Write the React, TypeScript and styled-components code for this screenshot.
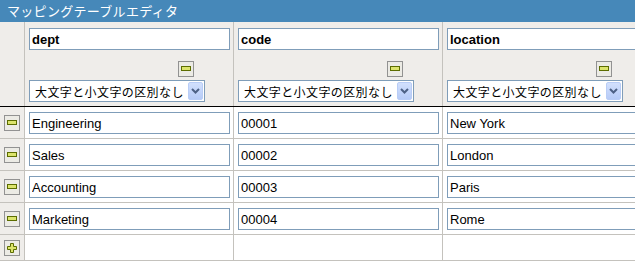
import styled, { createGlobalStyle } from 'styled-components';

const GlobalStyle = createGlobalStyle`
  body {
    margin: 0;
    overflow: hidden;
    background: #ffffff;
    font-family: "Liberation Sans", Arial, sans-serif;
  }
`;

const columns = [
  { name: 'dept', values: ['Engineering', 'Sales', 'Accounting', 'Marketing'] },
  { name: 'code', values: ['00001', '00002', '00003', '00004'] },
  { name: 'location', values: ['New York', 'London', 'Paris', 'Rome'] },
];

const MinusIcon = () => (
  <svg width="16" height="16" viewBox="0 0 16 16">
    <rect x="0.5" y="0.5" width="15" height="15" fill="#ecebe5" stroke="#929292" />
    <rect x="3.5" y="5.5" width="9" height="4" fill="#dce46c" stroke="#5c6d00" />
  </svg>
);

const PlusIcon = () => (
  <svg width="16" height="16" viewBox="0 0 16 16">
    <rect x="0.5" y="0.5" width="15" height="15" fill="#ecebe5" stroke="#929292" />
    <path
      d="M6.5 3.5 h3 v3 h3 v3 h-3 v3 h-3 v-3 h-3 v-3 h3 z"
      fill="#dce46c"
      stroke="#5c6d00"
    />
  </svg>
);

export default function App() {
  const rowCount = columns[0].values.length;

  return (
    <Editor>
      <GlobalStyle />
      <TitleBar>マッピングテーブルエディタ</TitleBar>
      <HeaderRow>
        <SideCell />
        {columns.map((col) => (
          <HeaderCell key={col.name}>
            <NameInput readOnly value={col.name} />
            <RemoveColumnLine>
              <IconButton>
                <MinusIcon />
              </IconButton>
            </RemoveColumnLine>
            <CaseSelect>
              <SelectText>大文字と小文字の区別なし</SelectText>
              <SelectArrow>
                <svg width="9" height="6" viewBox="0 0 9 6">
                  <path d="M1 1 L4.5 4.5 L8 1" fill="none" stroke="#4d6185" strokeWidth="2" />
                </svg>
              </SelectArrow>
            </CaseSelect>
          </HeaderCell>
        ))}
      </HeaderRow>
      {Array.from({ length: rowCount }).map((_, i) => (
        <DataRow key={i}>
          <SideCell $center>
            <IconButton>
              <MinusIcon />
            </IconButton>
          </SideCell>
          {columns.map((col) => (
            <DataCell key={col.name}>
              <ValueInput readOnly value={col.values[i]} />
            </DataCell>
          ))}
        </DataRow>
      ))}
      <AddRow>
        <SideCell>
          <IconButton>
            <PlusIcon />
          </IconButton>
        </SideCell>
        {columns.map((col) => (
          <DataCell key={col.name} />
        ))}
      </AddRow>
    </Editor>
  );
}

const Editor = styled.div`
  width: 652px;
`;

const TitleBar = styled.div`
  height: 22px;
  line-height: 22px;
  padding-left: 7px;
  background: #4688b9;
  color: #ffffff;
  font-family: "Noto Sans CJK JP", sans-serif;
  font-size: 13px;
  letter-spacing: 0.3px;
`;

const RowBase = styled.div`
  display: grid;
  grid-template-columns: 25px 209px 209px 209px;
`;

const HeaderRow = styled(RowBase)`
  height: 84px;
  background: #efedea;
  border-bottom: 1px solid #000000;
`;

const DataRow = styled(RowBase)`
  height: 31px;
  border-bottom: 1px solid #c4c2bd;
`;

const AddRow = styled(RowBase)`
  height: 25px;
  border-bottom: 1px solid #c4c2bd;
`;

const SideCell = styled.div<{ $center?: boolean }>`
  box-sizing: border-box;
  background: #efedea;
  border-right: 1px solid #c4c2bd;
  display: flex;
  justify-content: flex-start;
  align-items: ${({ $center }) => ($center ? 'center' : 'flex-start')};
  padding-left: 4px;
  padding-top: ${({ $center }) => ($center ? '0' : '5px')};
`;

const HeaderCell = styled.div`
  box-sizing: border-box;
  border-right: 1px solid #c4c2bd;
  padding: 6px 0 0 4px;
  display: flex;
  flex-direction: column;
`;

const DataCell = styled.div`
  box-sizing: border-box;
  border-right: 1px solid #c4c2bd;
  background: #ffffff;
  padding: 5px 0 0 4px;
`;

const InputBase = styled.input`
  box-sizing: border-box;
  width: 201px;
  height: 22px;
  margin: 0;
  border: 1px solid #7f9db9;
  padding: 0 2px;
  background: #ffffff;
  color: #000000;
  font-family: "Liberation Sans", Arial, sans-serif;
  font-size: 13px;
  outline: none;
`;

const NameInput = styled(InputBase)`
  font-weight: bold;
`;

const ValueInput = styled(InputBase)``;

const RemoveColumnLine = styled.div`
  width: 176px;
  box-sizing: border-box;
  display: flex;
  justify-content: flex-end;
  padding-right: 11px;
  margin-top: 11px;
`;

const IconButton = styled.span`
  display: block;
  width: 16px;
  height: 16px;
  line-height: 0;
  cursor: pointer;
`;

const CaseSelect = styled.div`
  box-sizing: border-box;
  width: 176px;
  height: 22px;
  margin-top: 3px;
  border: 1px solid #7f9db9;
  background: #ffffff;
  display: flex;
  align-items: center;
  justify-content: space-between;
  padding: 0 1px 0 5px;
  color: #000000;
`;

const SelectText = styled.span`
  min-width: 0;
  overflow: hidden;
  font-family: "Noto Sans CJK JP", sans-serif;
  font-size: 12px;
  letter-spacing: 0.4px;
  white-space: nowrap;
`;

const SelectArrow = styled.span`
  flex: none;
  width: 15px;
  height: 18px;
  box-sizing: border-box;
  border: 1px solid #b9cdf6;
  border-radius: 2px;
  background: linear-gradient(#d2e0fd, #b6cbf7);
  display: flex;
  align-items: center;
  justify-content: center;
`;
